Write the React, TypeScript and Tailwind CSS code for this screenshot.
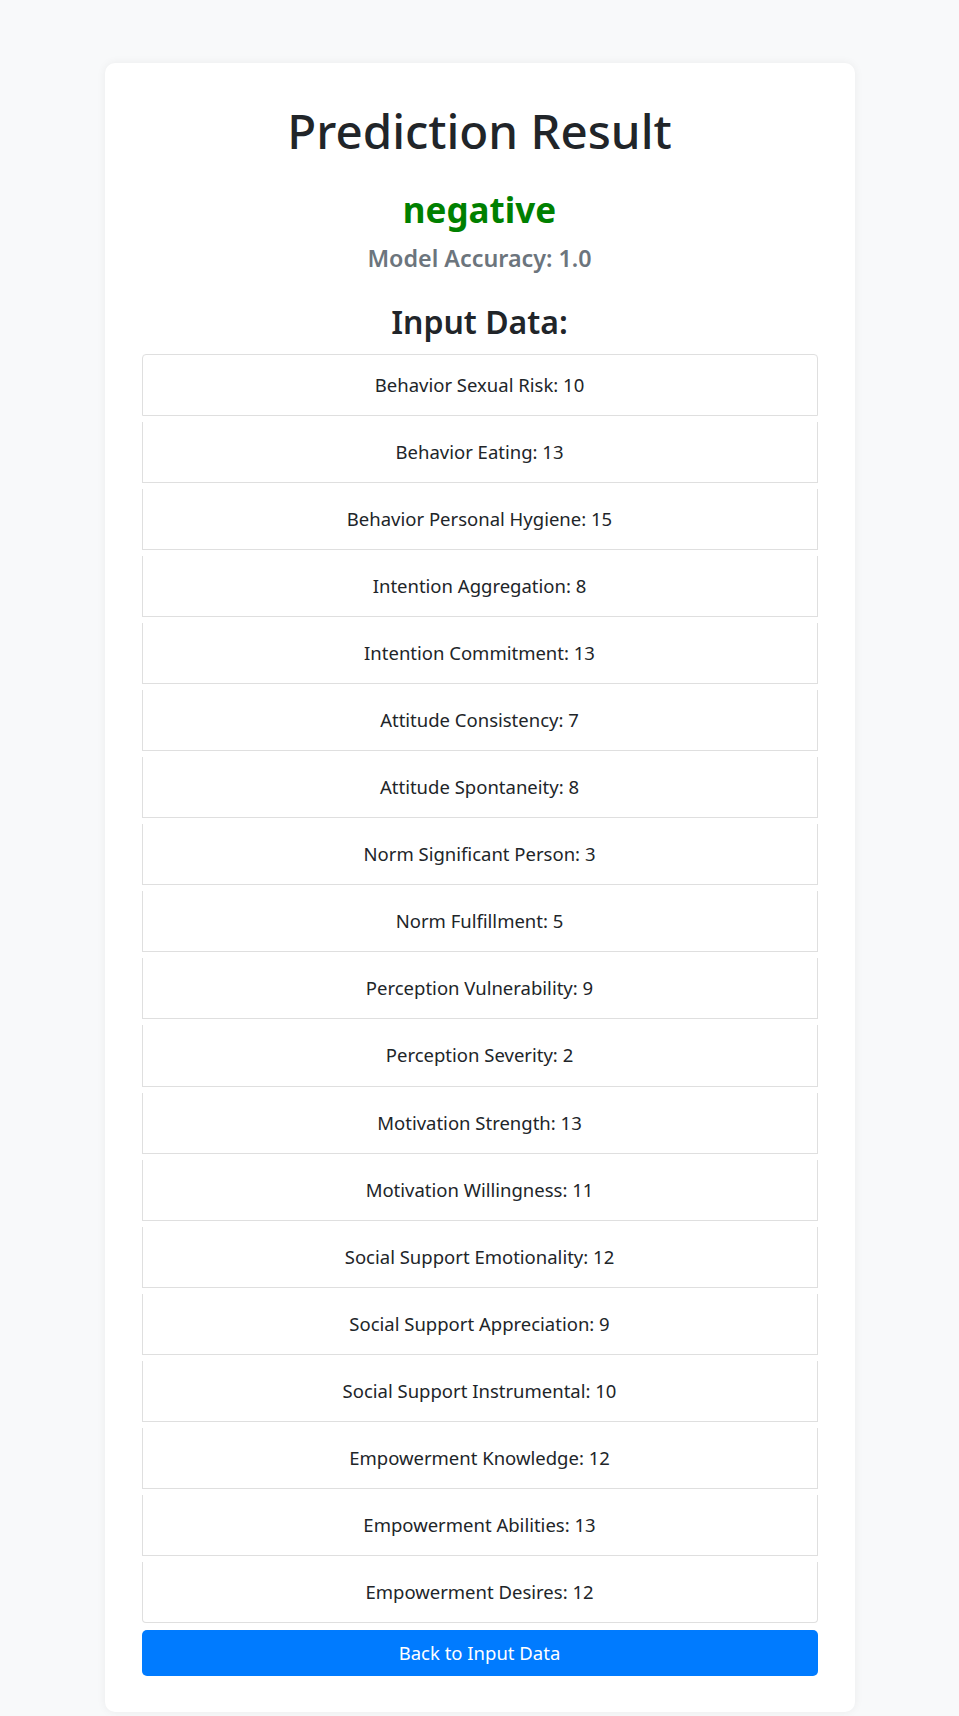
const inputs: [string, number][] = [
  ["Behavior Sexual Risk", 10],
  ["Behavior Eating", 13],
  ["Behavior Personal Hygiene", 15],
  ["Intention Aggregation", 8],
  ["Intention Commitment", 13],
  ["Attitude Consistency", 7],
  ["Attitude Spontaneity", 8],
  ["Norm Significant Person", 3],
  ["Norm Fulfillment", 5],
  ["Perception Vulnerability", 9],
  ["Perception Severity", 2],
  ["Motivation Strength", 13],
  ["Motivation Willingness", 11],
  ["Social Support Emotionality", 12],
  ["Social Support Appreciation", 9],
  ["Social Support Instrumental", 10],
  ["Empowerment Knowledge", 12],
  ["Empowerment Abilities", 13],
  ["Empowerment Desires", 12],
];

export default function App() {
  return (
    <main className="min-h-screen bg-[#f8f9fa] pt-[63px] font-['Noto_Sans',sans-serif] text-[#212529]">
      <div className="mx-auto w-[750px] rounded-[10px] bg-white px-[37px] pb-[36px] pt-[39px] shadow-[0_0_10px_rgba(0,0,0,0.06)]">
        <h1 className="text-center text-[47.5px] font-medium leading-[58px]">Prediction Result</h1>

        <h2 className="mt-[29px] text-center text-[35px] font-bold leading-[42px] text-[#008000]">
          negative
        </h2>
        <p className="mt-[13px] text-center text-[23.3px] font-semibold leading-[29px] text-[#6c757d]">
          Model Accuracy: 1.0
        </p>

        <h3 className="mt-[28px] text-center text-[32px] font-semibold leading-[42px]">Input Data:</h3>

        <ul className="mt-[11px] flex flex-col gap-[6px]">
          {inputs.map(([label, value], i) => (
            <li
              key={label}
              className={
                "border border-[#dfdfdf] bg-white py-[18px] text-center text-[18.5px] leading-[24.05px] " +
                (i === 0 ? "rounded-t-[4px]" : "border-t-0") +
                (i === inputs.length - 1 ? " rounded-b-[4px]" : "")
              }
            >
              {label}: {value}
            </li>
          ))}
        </ul>

        <button className="mt-[7px] h-[46px] w-full rounded-[5px] bg-[#007bff] text-[18.5px] text-white">
          Back to Input Data
        </button>
      </div>
    </main>
  );
}
